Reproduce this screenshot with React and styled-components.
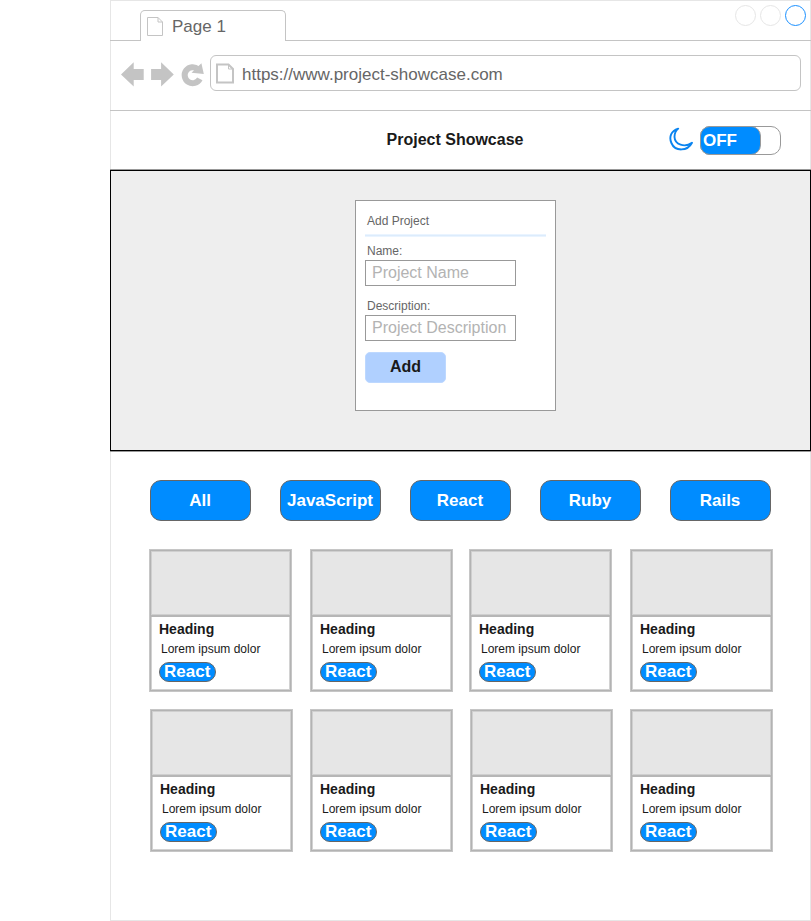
import React from "react";
import styled, { createGlobalStyle } from "styled-components";

const GlobalStyle = createGlobalStyle`
  *, *::before, *::after { box-sizing: border-box; }
  body {
    margin: 0;
    background: #fff;
    color: #1a1a1a;
    font-family: "Liberation Sans", Arial, Helvetica, sans-serif;
  }
  h1, h2, h3, p { margin: 0; }
`;

const Page = styled.div`
  padding-left: 110px;
  height: 921px;
  overflow: hidden;
`;

const BrowserWindow = styled.div`
  width: 701px;
  height: 921px;
  background: linear-gradient(#e6e6e6, #e6e6e6) left / 1px 100% no-repeat,
    linear-gradient(#e6e6e6, #e6e6e6) right / 1px 100% no-repeat,
    linear-gradient(#e6e6e6, #e6e6e6) top / 100% 1px no-repeat,
    linear-gradient(#e6e6e6, #e6e6e6) bottom / 100% 1px no-repeat;
`;

const TabBar = styled.div`
  display: flex;
  justify-content: space-between;
  height: 41px;
  padding: 10px 5px 0 30px;
  border-bottom: 1px solid #c4c4c4;
`;

const Tab = styled.div`
  display: flex;
  width: 146px;
  height: 31px;
  padding: 6px 0 0 6px;
  gap: 8px;
  border: 1px solid #c4c4c4;
  border-bottom: 0;
  border-radius: 5px 5px 0 0;
  background: #fff;
  color: #666;
  font-size: 17px;
  line-height: 20px;
`;

const WindowControls = styled.div`
  display: flex;
  gap: 4px;
  margin-top: -5px;
`;

const Control = styled.span`
  width: 21px;
  height: 21px;
  border: 1px solid ${({ $active }) => ($active ? "#1a90ff" : "#e6e6e6")};
  border-radius: 50%;
`;

const Toolbar = styled.div`
  display: flex;
  height: 70px;
  padding: 14px 10px 0 11px;
  border-bottom: 1px solid #c4c4c4;
`;

const NavIcons = styled.svg`
  width: 83px;
  height: 28px;
  margin-top: 5px;
  margin-right: 6px;
  fill: #c4c4c4;
`;

const AddressBar = styled.div`
  display: flex;
  flex: 1;
  height: 36px;
  padding: 7px 0 0 5px;
  gap: 7px;
  border: 1px solid #c4c4c4;
  border-radius: 6px;
  color: #666;
  font-size: 17px;
  line-height: 24px;
`;

const PageIcon = styled.svg`
  width: ${({ $w }) => $w}px;
  height: ${({ $h }) => $h}px;
  fill: none;
  stroke: #c4c4c4;
`;

const Header = styled.header`
  display: grid;
  grid-template-columns: 1fr auto 1fr;
  height: 59px;
  padding: 15px 30px 0 19px;
`;

const Title = styled.h1`
  grid-column: 2;
  padding-top: 4px;
  font-size: 16px;
  line-height: 20px;
`;

const ThemeControl = styled.div`
  display: flex;
  justify-content: flex-end;
  gap: 6px;
`;

const MoonIcon = styled.svg`
  width: 25px;
  height: 26px;
`;

const Toggle = styled.div`
  width: 81px;
  height: 29px;
  border: 1px solid #999;
  border-radius: 10px;
`;

const ToggleKnob = styled.div`
  width: 61px;
  height: 29px;
  margin: -1px;
  padding: 4px 0 0 2px;
  border: 1px solid #999;
  border-radius: 10px;
  background: #008cff;
  color: #fff;
  font-size: 17px;
  font-weight: bold;
  line-height: 20px;
`;

const Hero = styled.section`
  display: flex;
  justify-content: center;
  align-items: flex-start;
  height: 281px;
  padding: 29px 10px 0 0;
  border: 1px solid #000;
  background: #eee;
  box-shadow: 0 -1px 0 #999, 0 1px 0 #999;
`;

const Form = styled.form`
  display: flex;
  flex-direction: column;
  align-items: flex-start;
  width: 201px;
  height: 211px;
  padding: 13px 9px 0;
  border: 1px solid #999;
  background: #fff;
`;

const FormTitle = styled.h2`
  width: 181px;
  height: 23px;
  padding-left: 2px;
  border-bottom: 1px solid #eaf4ff;
  box-shadow: inset 0 -1px 0 #dcecfc, inset 0 -2px 0 #eaf4ff;
  color: #666;
  font-size: 12px;
  font-weight: normal;
  line-height: 14px;
`;

const Label = styled.label`
  height: 16px;
  margin: ${({ $top }) => $top}px 0 0 2px;
  color: #666;
  font-size: 12px;
  line-height: 14px;
`;

const Input = styled.input`
  width: 151px;
  height: 26px;
  padding: 0 0 0 6px;
  border: 1px solid #999;
  border-radius: 0;
  background: #fff;
  outline: 0;
  font-family: inherit;
  font-size: 16px;
  &::placeholder { color: #b3b3b3; opacity: 1; }
`;

const AddButton = styled.button`
  width: 81px;
  height: 31px;
  margin-top: 11px;
  padding: 0 0 2px;
  border: 1px solid #bdd8ff;
  border-radius: 5px;
  background: #b0d0ff;
  color: #1a1a1a;
  font-family: inherit;
  font-size: 16px;
  font-weight: bold;
`;

const Filters = styled.nav`
  display: flex;
  gap: 29px;
  padding: 29px 40px 28px;
`;

const FilterButton = styled.button`
  width: 101px;
  height: 41px;
  padding: 0 1px 0 0;
  border: 1px solid #666;
  border-radius: 11px;
  background: #008cff;
  color: #fff;
  font-family: inherit;
  font-size: 17px;
  font-weight: bold;
  line-height: 20px;
`;

const CardRow = styled.div`
  display: grid;
  grid-template-columns: ${({ $columns }) => $columns};
  margin: 0 0 17px ${({ $left }) => $left}px;
`;

const Card = styled.article`
  width: 143px;
  height: 143px;
  border: 1px solid #c6c6c6;
  box-shadow: inset 0 0 0 1px #b3b3b3, inset 0 0 0 2px #d2d2d2;
`;

const Thumbnail = styled.div`
  height: 67px;
  border: 1px solid #b3b3b3;
  border-bottom: 2px solid #b6b6b6;
  background: #e6e6e6;
  box-shadow: inset 0 0 0 1px #cfcfcf;
`;

const CardBody = styled.div`
  display: flex;
  flex-direction: column;
  align-items: flex-start;
  padding: 4px 0 0 9px;
`;

const Heading = styled.h3`
  font-size: 14px;
  line-height: 16px;
`;

const Description = styled.p`
  margin: 5px 0 6px 2px;
  font-size: 12px;
  line-height: 14px;
`;

const Tag = styled.span`
  width: 57px;
  height: 20px;
  padding-left: 4px;
  border: 1px solid #666;
  border-radius: 10px;
  background: #008cff;
  color: #fff;
  font-size: 17px;
  font-weight: bold;
  line-height: 18px;
`;

const filters = ["All", "JavaScript", "React", "Ruby", "Rails"];

const rows = [
  { left: 39, columns: "161px 159px 161px 143px" },
  { left: 40, columns: "160px 160px 160px 143px" },
];

function ProjectCard() {
  return (
    <Card>
      <Thumbnail />
      <CardBody>
        <Heading>Heading</Heading>
        <Description>Lorem ipsum dolor</Description>
        <Tag>React</Tag>
      </CardBody>
    </Card>
  );
}

export default function App() {
  return (
    <>
      <GlobalStyle />
      <Page>
        <BrowserWindow>
          <TabBar>
            <Tab>
              <PageIcon $w={17} $h={20} viewBox="0 0 17 20">
                <path d="M.5 .5H11L15.5 5V18.5H.5ZM11 .5V5H15.5" />
              </PageIcon>
              Page 1
            </Tab>
            <WindowControls>
              <Control />
              <Control />
              <Control $active />
            </WindowControls>
          </TabBar>
          <Toolbar>
            <NavIcons viewBox="121 60 83 28">
              <path d="M121 74.4L133.7 62.3V69H143.7V80H133.7V86.5Z" />
              <path d="M173.8 74.4L161.1 62.3V69H151.1V80H161.1V86.5Z" />
              <path
                d="M198 69.2A8 8 0 1 0 199.8 78.8"
                fill="none"
                stroke="#c4c4c4"
                strokeWidth="6"
              />
              <path d="M201.4 63.2L203.8 74L191.5 72.7Z" />
            </NavIcons>
            <AddressBar>
              <PageIcon $w={19} $h={21} viewBox="0 0 19 21">
                <path d="M1 1.5H12.5L17 6V19.5H1Z" strokeWidth="2" />
                <path d="M12.5 1.5V6H17" />
              </PageIcon>
              https://www.project-showcase.com
            </AddressBar>
          </Toolbar>
          <Header>
            <Title>Project Showcase</Title>
            <ThemeControl>
              <MoonIcon viewBox="669 126 25 26">
                <path
                  d="M678.2 128.6C671 131 668.8 137 671.4 143C675 151.6 687.5 151.6 692 142.8C684.5 148 674.8 144.5 674.5 137C674.4 133.5 675.7 130.8 678.2 128.6Z"
                  fill="#fff"
                  stroke="#0a84f0"
                  strokeWidth="1.9"
                  strokeLinejoin="round"
                />
              </MoonIcon>
              <Toggle>
                <ToggleKnob>OFF</ToggleKnob>
              </Toggle>
            </ThemeControl>
          </Header>
          <Hero>
            <Form>
              <FormTitle>Add Project</FormTitle>
              <Label $top={7} htmlFor="name">Name:</Label>
              <Input id="name" placeholder="Project Name" />
              <Label $top={13} htmlFor="description">Description:</Label>
              <Input id="description" placeholder="Project Description" />
              <AddButton type="button">Add</AddButton>
            </Form>
          </Hero>
          <Filters>
            {filters.map((name) => (
              <FilterButton key={name}>{name}</FilterButton>
            ))}
          </Filters>
          {rows.map((row) => (
            <CardRow key={row.left} $left={row.left} $columns={row.columns}>
              <ProjectCard />
              <ProjectCard />
              <ProjectCard />
              <ProjectCard />
            </CardRow>
          ))}
        </BrowserWindow>
      </Page>
    </>
  );
}
